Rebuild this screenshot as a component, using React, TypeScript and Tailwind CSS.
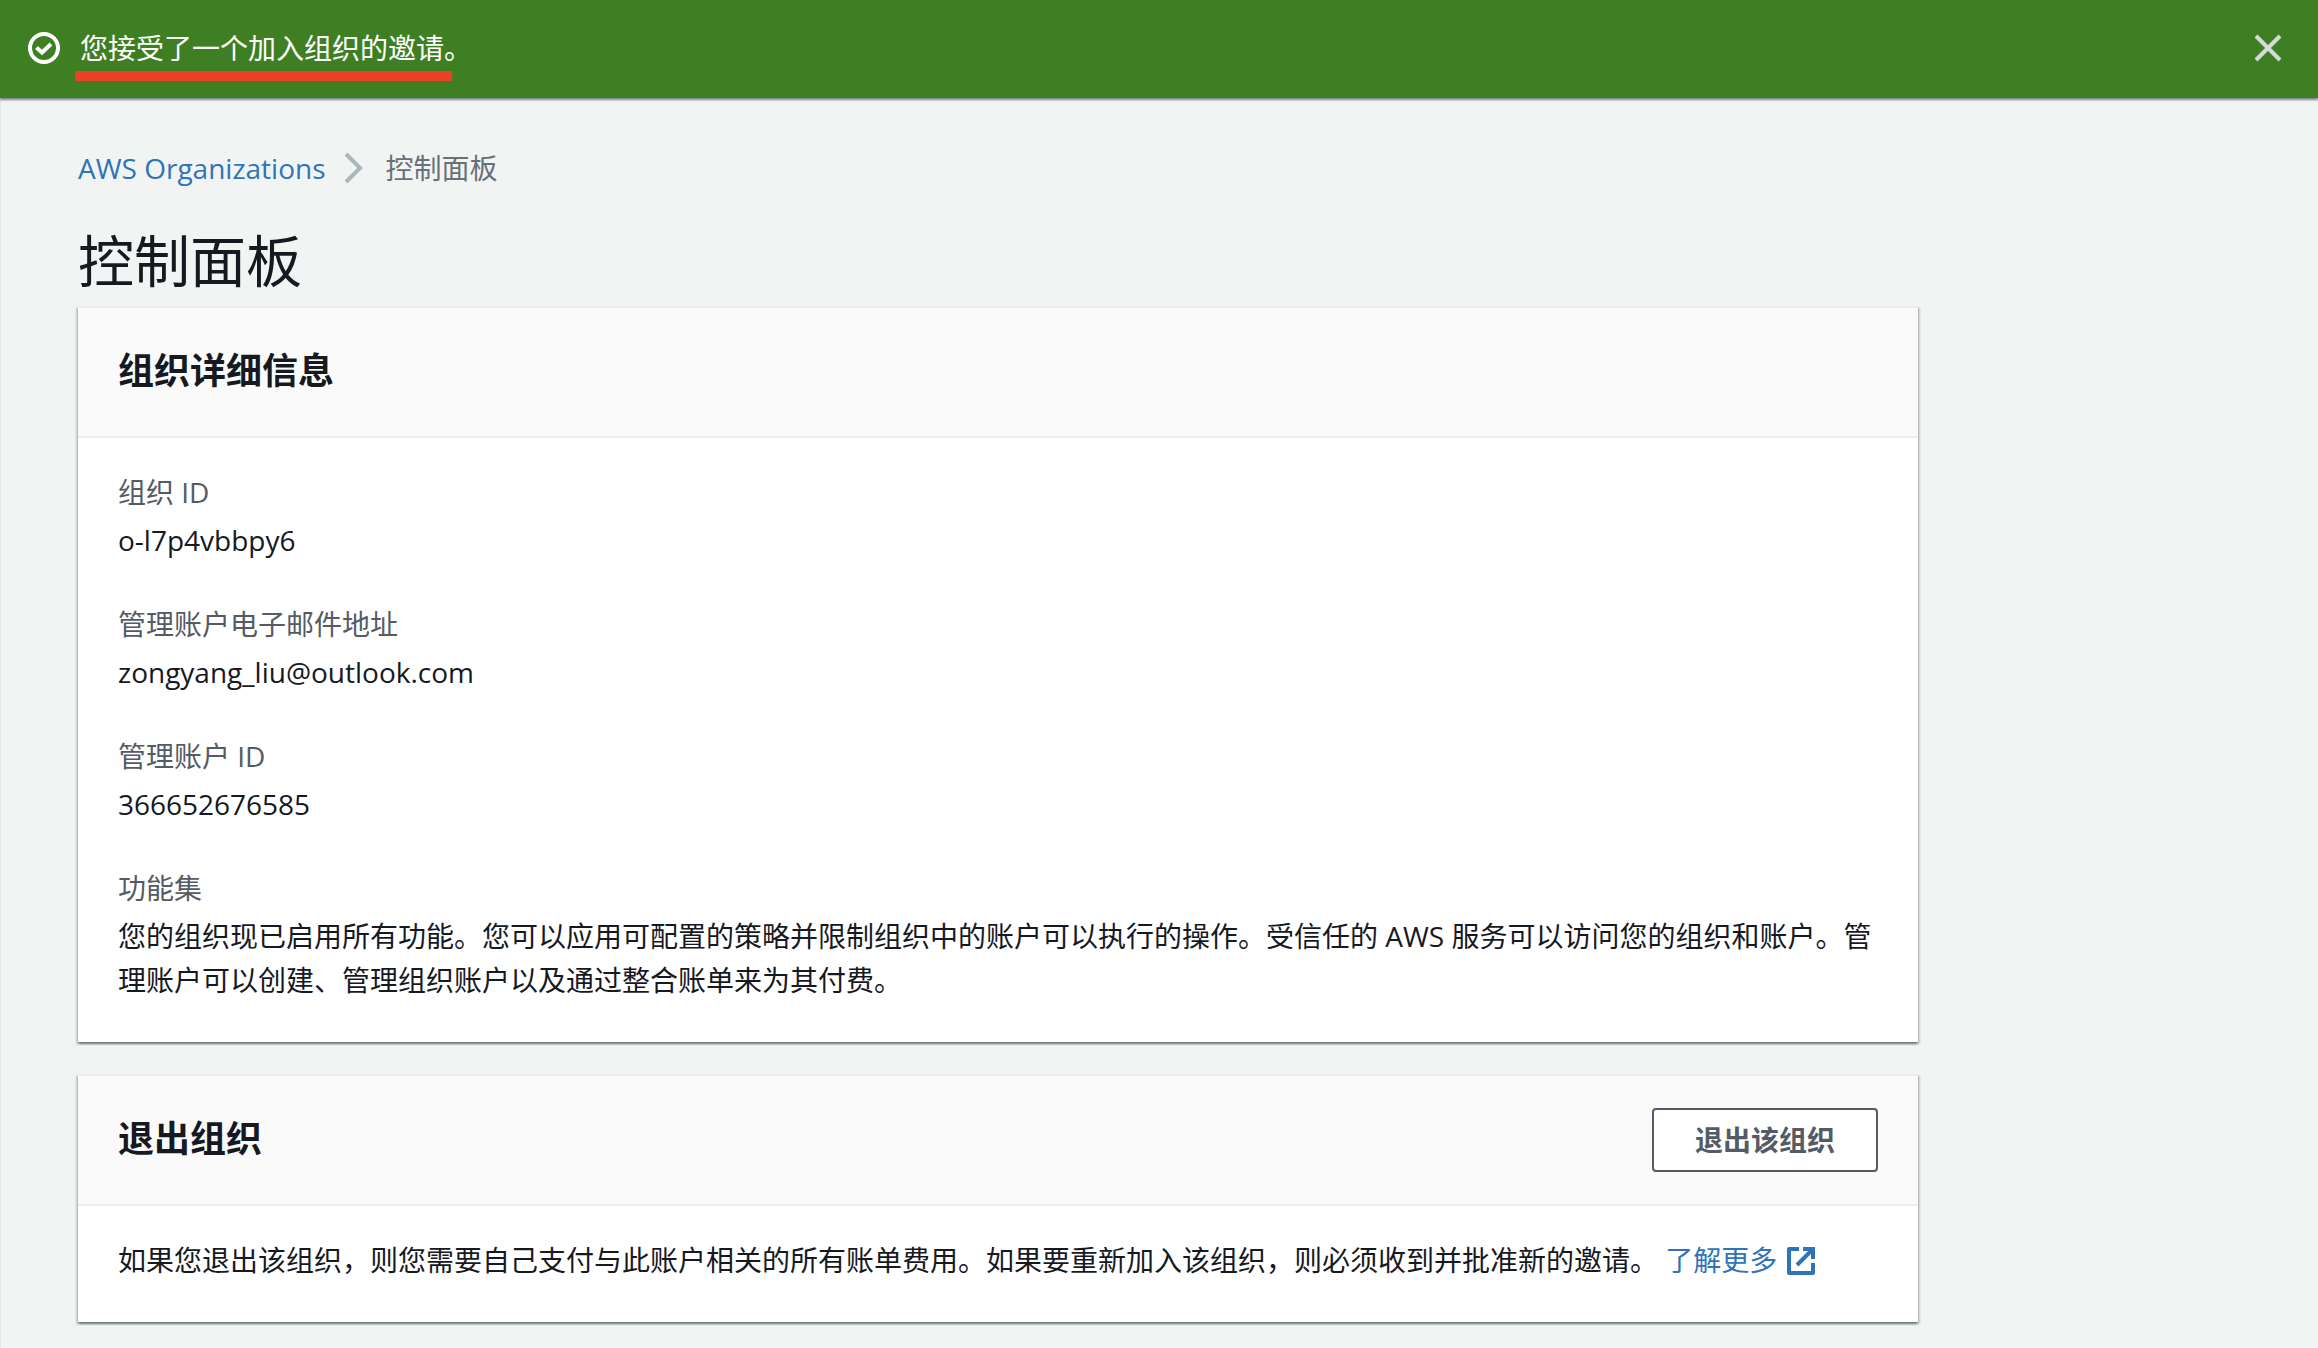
import type { ReactNode } from "react";

function CheckCircleIcon() {
  return (
    <svg viewBox="0 0 32 32" className="size-8 shrink-0" fill="none" stroke="currentColor" strokeWidth="4" aria-hidden="true">
      <circle cx="16" cy="16" r="14" />
      <path d="M8.5 15.5 14 20.5 23 12" />
    </svg>
  );
}

function CloseIcon() {
  return (
    <svg viewBox="0 0 32 32" className="size-8" fill="none" stroke="currentColor" strokeWidth="4" aria-hidden="true">
      <path d="M4 4 28 28M28 4 4 28" />
    </svg>
  );
}

function ChevronIcon() {
  return (
    <svg viewBox="0 0 20 32" className="h-8 w-5" fill="none" stroke="currentColor" strokeWidth="4" aria-hidden="true">
      <path d="M2 2 16 16 2 30" />
    </svg>
  );
}

function ExternalIcon() {
  return (
    <svg viewBox="0 0 28 28" className="ml-0.5 inline-block size-7 align-[-4px]" fill="none" stroke="currentColor" strokeWidth="4" aria-hidden="true">
      <path d="M12 2H2V26H26V16" strokeLinejoin="round" />
      <path d="M16 2H26V12M26 2 10 18" />
    </svg>
  );
}

function Card({ title, action, children }: { title: string; action?: ReactNode; children: ReactNode }) {
  return (
    <section className="border-t-2 border-[#eaeded] bg-white shadow-[0_2px_2px_0_rgba(0,28,36,0.4),2px_2px_2px_0_rgba(0,28,36,0.15),-2px_2px_2px_0_rgba(0,28,36,0.15)]">
      <header className="flex items-start justify-between border-b-2 border-[#eaeded] bg-[#fafafa] px-10 py-8">
        <h2 className="h-16 text-[36px] leading-[62px] font-bold">{title}</h2>
        {action}
      </header>
      <div className="px-10 pt-8 pb-10">{children}</div>
    </section>
  );
}

function Field({ label, children }: { label: string; children: ReactNode }) {
  return (
    <div>
      <dt className="mb-1 text-[#545b64]">{label}</dt>
      <dd>{children}</dd>
    </div>
  );
}

export default function App() {
  return (
    <div
      lang="zh-CN"
      className="min-h-screen border-l border-[#e4e7e7] bg-[#f2f3f3] font-['Open_Sans','Noto_Sans_CJK_SC',sans-serif] text-[28px] leading-[44px] text-[#16191f]"
    >
      <div role="status" className="-ml-px flex items-center justify-between bg-[#3f7f23] pt-[26px] pb-7 pr-[34px] pl-7 text-white shadow-[0_2px_2px_0_#7d8490]">
        <div className="flex items-center gap-5">
          <CheckCircleIcon />
          <p className="relative">
            您接受了一个加入组织的邀请。
            <span className="absolute top-[45px] right-5 -left-[5px] h-[10px] bg-[#ea4126]" />
          </p>
        </div>
        <button type="button" aria-label="关闭" className="text-[#d5dbdb]">
          <CloseIcon />
        </button>
      </div>

      <main className="w-full max-w-[1917px] pt-12 pl-[77px]">
        <nav aria-label="面包屑">
          <ol className="flex items-center">
            <li>
              <a href="#organizations" className="text-[#2f73b9]">AWS Organizations</a>
            </li>
            <li aria-hidden="true" className="mr-[22px] ml-[18px] text-[#aab7b8]">
              <ChevronIcon />
            </li>
            <li aria-current="page" className="text-[#687078]">控制面板</li>
          </ol>
        </nav>

        <h1 className="mt-[34px] mb-[10px] text-[56px] leading-[72px]">控制面板</h1>

        <div className="flex flex-col gap-8">
          <Card title="组织详细信息">
            <dl className="flex flex-col gap-10">
              <Field label="组织 ID">o-l7p4vbbpy6</Field>
              <Field label="管理账户电子邮件地址">zongyang_liu@outlook.com</Field>
              <Field label="管理账户 ID">366652676585</Field>
              <Field label="功能集">
                您的组织现已启用所有功能。您可以应用可配置的策略并限制组织中的账户可以执行的操作。受信任的 AWS 服务可以访问您的组织和账户。管理账户可以创建、管理组织账户以及通过整合账单来为其付费。
              </Field>
            </dl>
          </Card>

          <Card
            title="退出组织"
            action={
              <button type="button" className="h-16 rounded-sm border-2 border-[#545b64] bg-white px-[41px] font-bold text-[#545b64]">
                退出该组织
              </button>
            }
          >
            <p>
              如果您退出该组织，则您需要自己支付与此账户相关的所有账单费用。如果要重新加入该组织，则必须收到并批准新的邀请。{" "}
              <a href="#learn-more" className="text-[#2f73b9]">
                了解更多 <ExternalIcon />
              </a>
            </p>
          </Card>
        </div>
      </main>
    </div>
  );
}
